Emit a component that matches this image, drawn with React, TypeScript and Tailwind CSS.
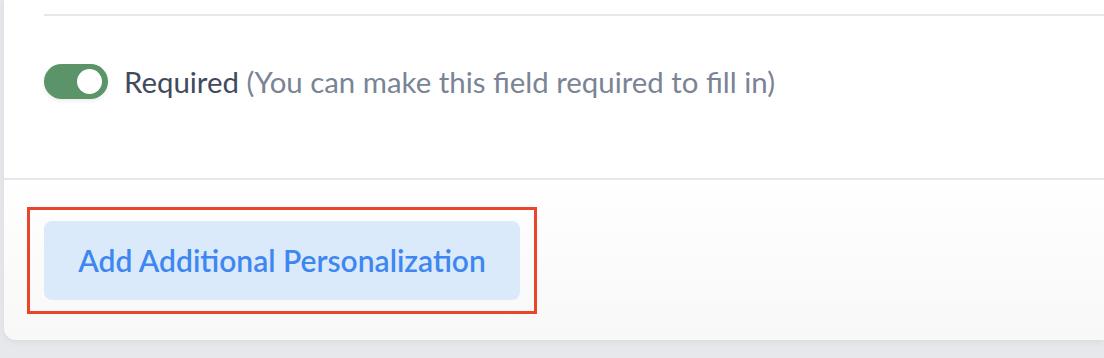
export default function App() {
  return (
    <div
      className="h-[358px] w-full overflow-hidden bg-[#e6e8eb] pl-1"
      style={{ fontFamily: 'Lato, "Noto Sans", sans-serif' }}
    >
      <div className="flex h-[340px] flex-col rounded-bl-xl bg-gradient-to-b from-white via-white to-[#f8f8f8] shadow-[0_2px_6px_rgba(0,0,0,0.06)]">
        {/* Required toggle section */}
        <div className="h-[178px] pl-10">
          <div className="mt-[14px] border-t-2 border-[#e6e7ec]" />
          <div className="mt-[48px] flex items-center gap-4">
            <div className="flex h-[35px] w-[64px] items-center justify-end rounded-full bg-[#5b9468] pr-[6px] shadow-[0_2px_4px_rgba(0,0,0,0.08)]">
              <div className="h-[25px] w-[25px] rounded-full bg-white" />
            </div>
            <p className="text-[29.4px] leading-none">
              <span className="text-[#3f4a5c]">Required</span>{' '}
              <span className="text-[#7a8494]">(You can make this field required to fill in)</span>
            </p>
          </div>
        </div>

        {/* Footer */}
        <div className="border-t-2 border-[#e6e7ec] pl-[23px] pt-[27px]">
          <div className="inline-block border-[3px] border-[#e8452c] px-[14px] py-[11px]">
            <button className="flex h-[79px] w-[476px] items-center justify-center rounded-lg bg-[#dbeafb] text-[30px] font-semibold text-[#3e87f0]">
              Add Additional Personalization
            </button>
          </div>
        </div>
      </div>
    </div>
  );
}
